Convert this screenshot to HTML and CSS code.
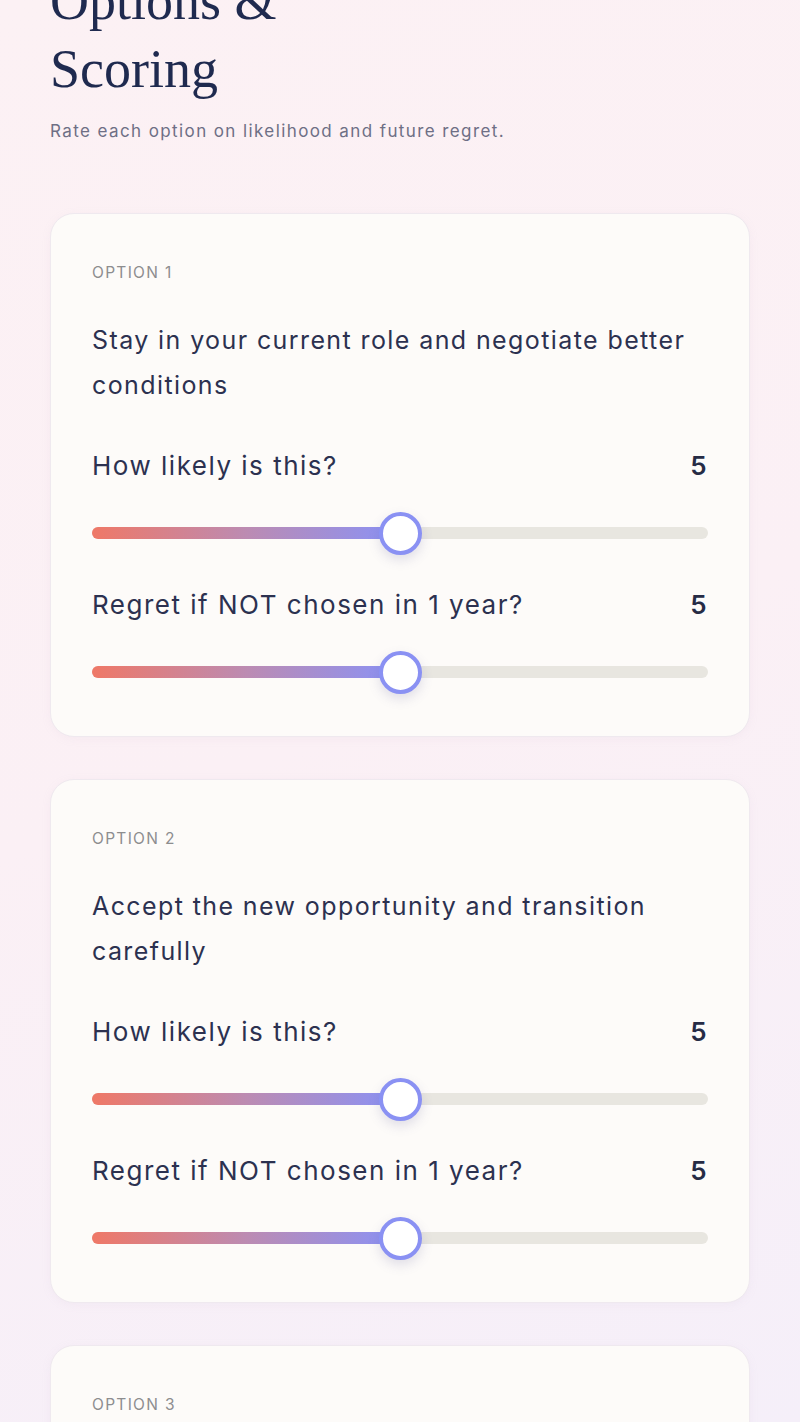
FILE: index.html
```html
<!DOCTYPE html>
<html lang="en">

<head>
  <meta charset="UTF-8">
  <meta name="viewport" content="width=device-width, initial-scale=1.0">
  <link rel="stylesheet" href="styles.css">
  <title>Options &amp; Scoring</title>
</head>

<body>
  <div id="page">
    <h1 id="title">Options &amp;<br>Scoring</h1>
    <p id="subtitle">Rate each option on likelihood and future regret.</p>

    <div class="card">
      <div class="option-label">OPTION 1</div>
      <div class="option-text">Stay in your current role and negotiate better conditions</div>

      <div class="field">
        <div class="field-head"><span>How likely is this?</span><span class="value">5</span></div>
        <div class="slider">
          <div class="fill" style="width: 50%;"></div>
          <div class="thumb" style="left: 50%;"></div>
        </div>
      </div>

      <div class="field">
        <div class="field-head"><span>Regret if NOT chosen in 1 year?</span><span class="value">5</span></div>
        <div class="slider">
          <div class="fill" style="width: 50%;"></div>
          <div class="thumb" style="left: 50%;"></div>
        </div>
      </div>
    </div>

    <div class="card">
      <div class="option-label">OPTION 2</div>
      <div class="option-text">Accept the new opportunity and transition carefully</div>

      <div class="field">
        <div class="field-head"><span>How likely is this?</span><span class="value">5</span></div>
        <div class="slider">
          <div class="fill" style="width: 50%;"></div>
          <div class="thumb" style="left: 50%;"></div>
        </div>
      </div>

      <div class="field">
        <div class="field-head"><span>Regret if NOT chosen in 1 year?</span><span class="value">5</span></div>
        <div class="slider">
          <div class="fill" style="width: 50%;"></div>
          <div class="thumb" style="left: 50%;"></div>
        </div>
      </div>
    </div>

    <div class="card">
      <div class="option-label">OPTION 3</div>
    </div>
  </div>
</body>

</html>
```

FILE: styles.css
```css
html, body {
  margin: 0;
  height: 100%;
  overflow: hidden;
}

body {
  font-family: 'Inter', 'Noto Sans', sans-serif;
  color: #2c3150;
  background: linear-gradient(160deg, #fcf1f4 0%, #fbf0f5 50%, #f5eff9 100%);
}

#page {
  padding: 0 50px;
}

#title {
  font-family: 'Liberation Serif', serif;
  font-weight: normal;
  font-size: 54px;
  line-height: 68px;
  color: #1f2a4f;
  margin: -33px 0 0 0;
}

#subtitle {
  font-size: 17px;
  line-height: 26px;
  letter-spacing: 1.4px;
  color: #6e6f85;
  margin: 15px 0 0 0;
}

.card {
  background-color: #fdfbf9;
  border: 1px solid #efe9ef;
  border-radius: 24px;
  padding: 49px 41px 58px;
  margin-top: 42px;
  box-shadow: 0 2px 10px rgba(180, 160, 190, 0.08);
}

#subtitle + .card {
  margin-top: 69px;
}

.option-label {
  font-size: 15.5px;
  line-height: 20px;
  letter-spacing: 1.3px;
  color: #8d8d8f;
}

.option-text {
  font-size: 25px;
  line-height: 45px;
  letter-spacing: 1.4px;
  margin-top: 35px;
  color: #2c3150;
}

.field {
  margin-top: 48px;
}

.option-text + .field {
  margin-top: 40px;
}

.field-head {
  display: flex;
  justify-content: space-between;
  font-size: 26px;
  line-height: 36px;
  letter-spacing: 1.5px;
}

.value {
  font-weight: 600;
  color: #262b45;
}

.slider {
  position: relative;
  height: 12px;
  margin-top: 43px;
  border-radius: 6px;
  background-color: #e8e6e0;
}

.fill {
  height: 100%;
  border-radius: 6px;
  background: linear-gradient(90deg, #ef7867 0%, #bc8bb2 50%, #8a92f6 100%);
}

.thumb {
  position: absolute;
  top: 50%;
  width: 35px;
  height: 35px;
  margin: -21.5px 0 0 -21.5px;
  border: 4px solid #8a91f3;
  border-radius: 50%;
  background-color: #ffffff;
  box-shadow: 0 5px 12px rgba(90, 90, 150, 0.18);
}
```
